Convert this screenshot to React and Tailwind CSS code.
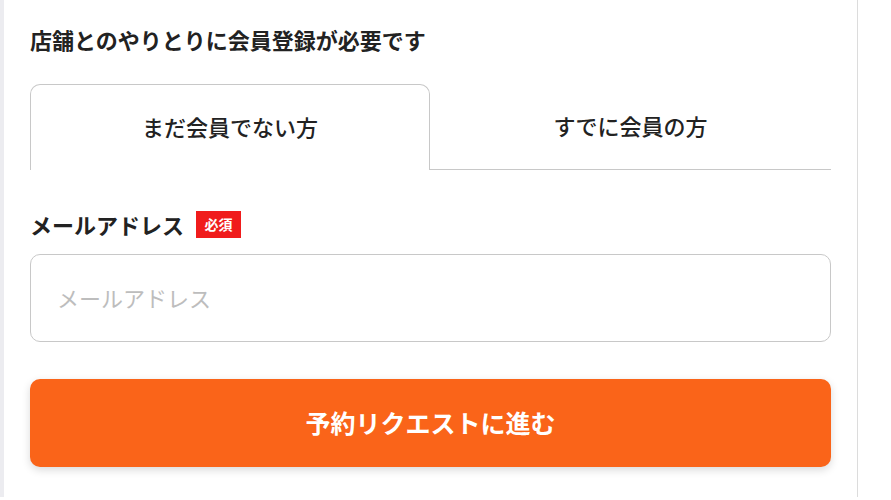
import React, { useState } from 'react';

export default function App() {
  const [tab, setTab] = useState('new');
  const [email, setEmail] = useState('');

  return (
    <div className="w-[891px] h-[500px] bg-white" style={{ fontFamily: '"Noto Sans CJK JP", "Noto Sans", sans-serif' }}>
      <div className="w-[858px] h-[497px] border-l-[4px] border-l-[#ececf0] border-r border-r-[#dcdcdc] pl-[26px] pr-[26px] pt-[24px]">
        <h2 className="text-[22px] leading-[30px] font-bold text-[#222]">店舗とのやりとりに会員登録が必要です</h2>

        <div className="flex mt-[30px] h-[86px]">
          <button
            onClick={() => setTab('new')}
            className={`w-[400px] pb-[3px] text-[22px] font-medium text-[#222] ${
              tab === 'new'
                ? 'border border-b-0 border-[#c8c8c8] rounded-t-[10px]'
                : 'border-b border-[#c8c8c8]'
            }`}
          >
            まだ会員でない方
          </button>
          <button
            onClick={() => setTab('member')}
            className={`flex-1 pb-[3px] text-[22px] font-medium text-[#222] ${
              tab === 'member'
                ? 'border border-b-0 border-[#c8c8c8] rounded-t-[10px]'
                : 'border-b border-[#c8c8c8]'
            }`}
          >
            すでに会員の方
          </button>
        </div>

        <div className="flex items-center mt-[39px] h-[30px]">
          <label className="text-[22px] font-bold text-[#222] leading-none">メールアドレス</label>
          <span className="ml-[12px] w-[45px] h-[27px] flex items-center justify-center bg-[#f01c1c] text-white text-[14px] font-bold leading-none">必須</span>
        </div>

        <input
          type="email"
          placeholder="メールアドレス"
          value={email}
          onChange={e => setEmail(e.target.value)}
          className="mt-[15px] w-full h-[88px] border border-[#c8c8c8] rounded-[10px] pl-[26px] pb-[2px] text-[22px] text-[#222] placeholder:text-[#bdbdbd] outline-none"
        />

        <button className="mt-[37px] w-full h-[88px] bg-[#fa6419] rounded-[10px] shadow-[0_3px_8px_rgba(0,0,0,0.15)] text-white text-[25px] font-bold">
          予約リクエストに進む
        </button>
      </div>
    </div>
  );
}
